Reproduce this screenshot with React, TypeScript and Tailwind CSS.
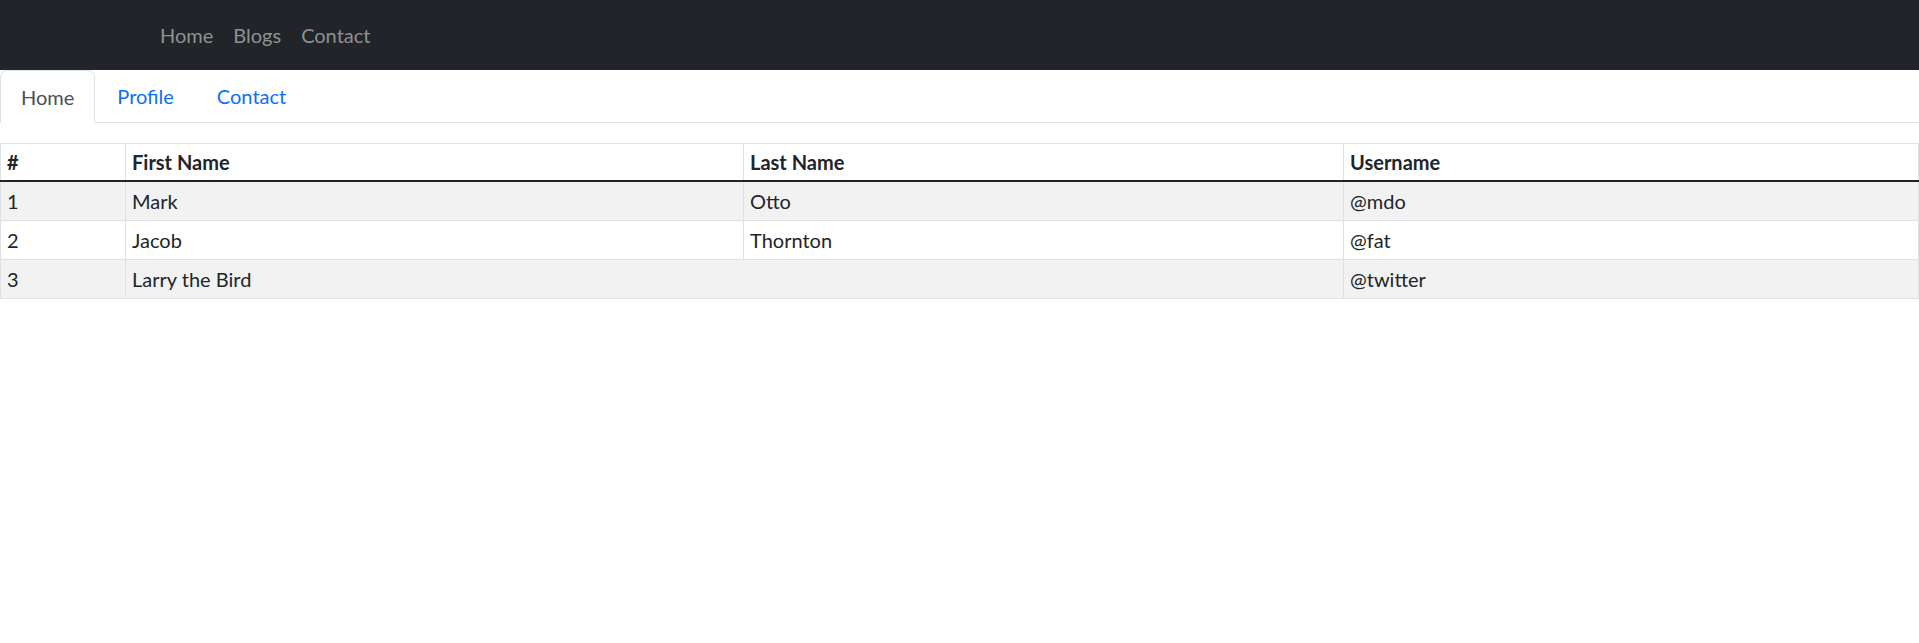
const navLinks = ["Home", "Blogs", "Contact"];

const rows = [
  { id: "1", first: "Mark", last: "Otto", user: "@mdo" },
  { id: "2", first: "Jacob", last: "Thornton", user: "@fat" },
  { id: "3", first: "Larry the Bird", last: null, user: "@twitter" },
];

const cell = "px-[6px] py-[4px] leading-[30px] border border-[#dee2e6]";

export default function App() {
  return (
    <div className="min-h-[643px] bg-white text-[20px] text-[#212529] font-['Lato','Liberation_Sans',sans-serif]">
      {/* Top navbar */}
      <nav className="h-[70px] bg-[#212529] flex items-center pl-[150px]">
        <ul className="flex">
          {navLinks.map((l) => (
            <li key={l}>
              <a href="#" className="block px-[10px] leading-[30px] text-[#8f9193]">
                {l}
              </a>
            </li>
          ))}
        </ul>
      </nav>

      {/* Tabs */}
      <ul className="flex border-b border-[#dee2e6] h-[53px]">
        <li className="-mb-px">
          <a
            href="#"
            className="block h-[53px] px-[20px] pt-[11px] leading-[30px] text-[#495057] bg-white border border-[#dee2e6] border-b-white rounded-t-[7px]"
          >
            Home
          </a>
        </li>
        <li>
          <a href="#" className="block h-[52px] pl-[22px] pr-[21px] pt-[11px] leading-[30px] text-[#0d6efd]">
            Profile
          </a>
        </li>
        <li>
          <a href="#" className="block h-[52px] px-[22px] pt-[11px] leading-[30px] text-[#0d6efd]">
            Contact
          </a>
        </li>
      </ul>

      {/* Table */}
      <table className="mt-[20px] w-full table-fixed border-collapse border border-[#dee2e6]">
        <colgroup>
          <col className="w-[125px]" />
          <col className="w-[618px]" />
          <col className="w-[600px]" />
          <col />
        </colgroup>
        <thead>
          <tr>
            {["#", "First Name", "Last Name", "Username"].map((h) => (
              <th
                key={h}
                className="text-left font-bold px-[6px] py-[3px] leading-[30px] border-x border-[#dee2e6] border-b-2 border-b-[#212529]"
              >
                {h}
              </th>
            ))}
          </tr>
        </thead>
        <tbody>
          {rows.map((r, i) => (
            <tr key={r.id} className={i % 2 === 0 ? "bg-[#f2f2f2]" : "bg-white"}>
              <td className={cell}>{r.id}</td>
              {r.last === null ? (
                <td colSpan={2} className={cell}>
                  {r.first}
                </td>
              ) : (
                <>
                  <td className={cell}>{r.first}</td>
                  <td className={cell}>{r.last}</td>
                </>
              )}
              <td className={cell}>{r.user}</td>
            </tr>
          ))}
        </tbody>
      </table>
    </div>
  );
}
